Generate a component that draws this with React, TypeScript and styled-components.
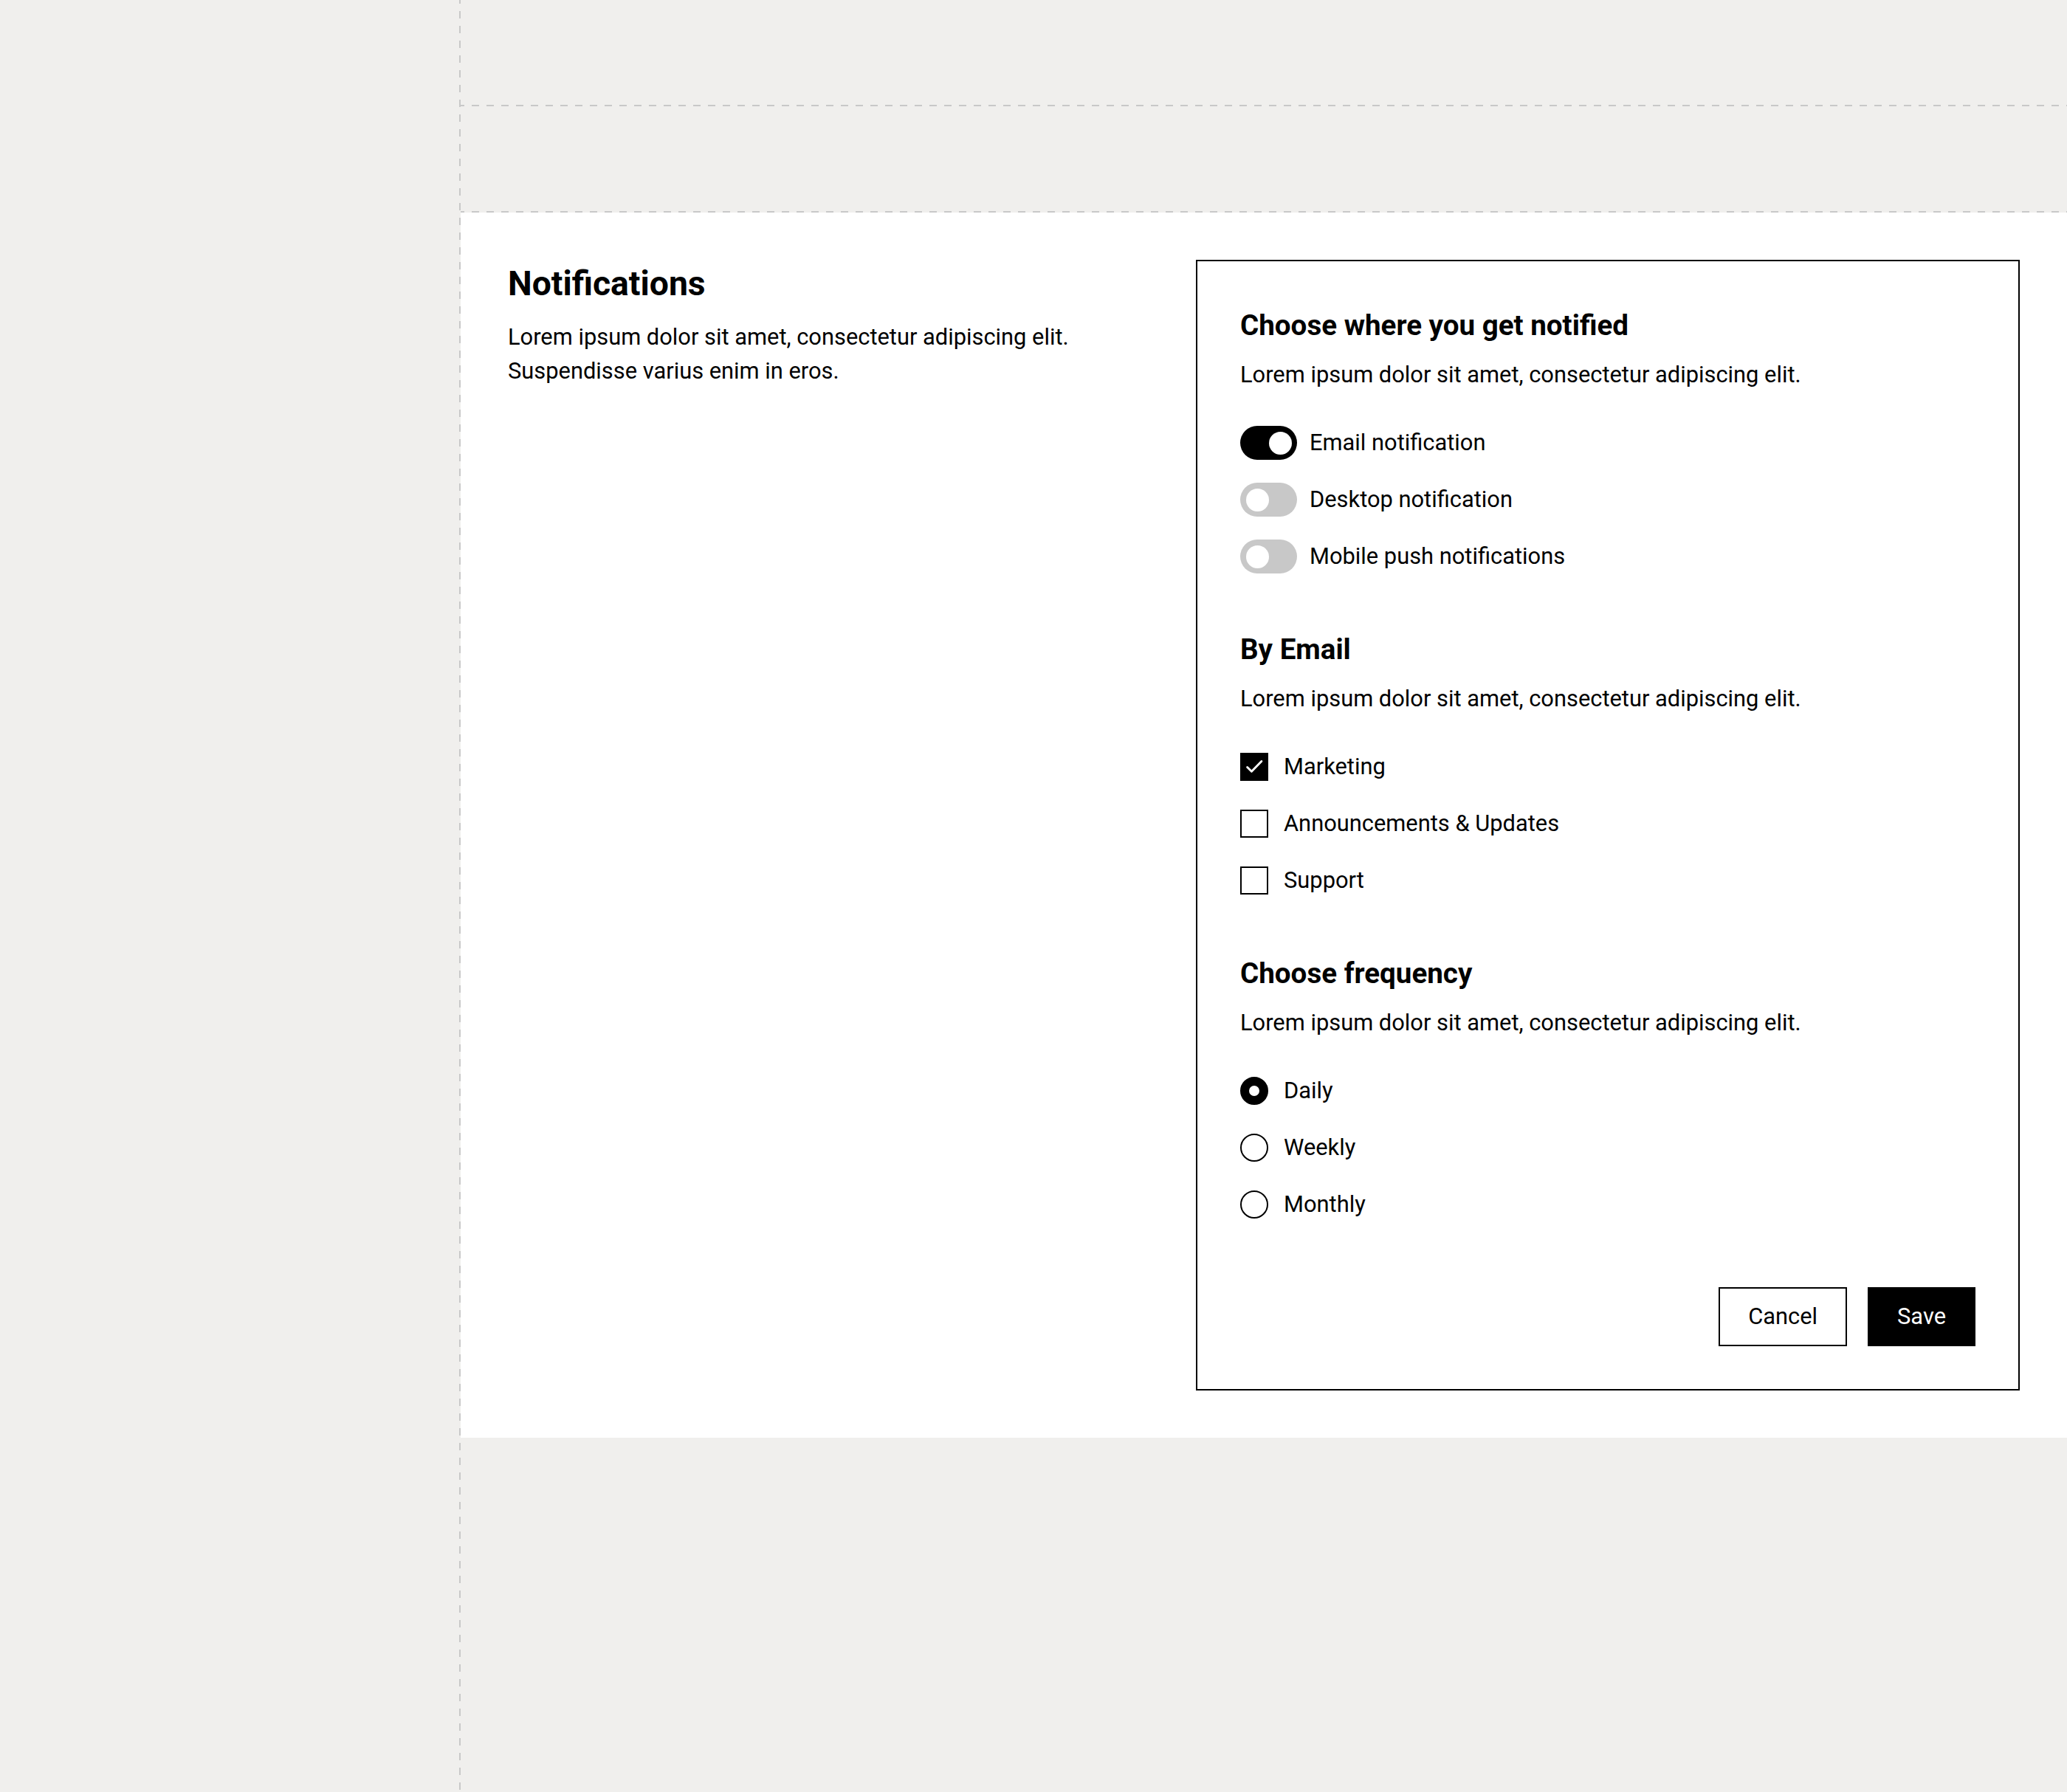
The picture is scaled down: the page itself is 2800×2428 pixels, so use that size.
import React from "react";
import styled, { createGlobalStyle } from "styled-components";

//#region
const GlobalStyle = createGlobalStyle`
  * {
    box-sizing: border-box;
  }

  body {
    margin: 0;
    background: #f0efed;
    color: #000;
    font-family: Roboto, "Liberation Sans", sans-serif;
  }
`;

const dashColor = "#c8c8c8";

const Shell = styled.div`
  display: flex;
  min-height: 100vh;
`;

const Sidebar = styled.aside`
  flex: 0 0 624px;
  background-image: repeating-linear-gradient(
    to bottom,
    ${dashColor} 0 5px,
    transparent 5px 15px,
    ${dashColor} 15px 20px
  );
  background-size: 2px 100%;
  background-position: right top;
  background-repeat: no-repeat;
`;

const Main = styled.main`
  flex: 1;
  display: flex;
  flex-direction: column;
`;

const Band = styled.div`
  height: 144px;
  background-image: repeating-linear-gradient(
    to right,
    ${dashColor} 0 5px,
    transparent 5px 15px,
    ${dashColor} 15px 20px
  );
  background-size: 100% 2px;
  background-position: left bottom;
  background-repeat: no-repeat;
`;

const Panel = styled.section`
  display: grid;
  grid-template-columns: 1fr 1116px;
  gap: 96px;
  padding: 64px;
  background: #fff;
`;

const Intro = styled.div`
  display: flex;
  flex-direction: column;
  gap: 18px;
`;

const Heading = styled.h2`
  margin: 0;
  font-size: 46.3px;
  font-weight: 700;
  line-height: 64px;
`;

const Text = styled.p`
  margin: 0;
  font-size: 30.85px;
  line-height: 46px;
`;

const Card = styled.form`
  display: flex;
  flex-direction: column;
  gap: 77px;
  padding: 61px 58px 58px;
  border: 2px solid #000;
`;

const Group = styled.div`
  display: flex;
  flex-direction: column;
`;

const GroupTitle = styled.h3`
  margin: 0 0 18px;
  font-size: 38.6px;
  font-weight: 700;
  line-height: 52px;
`;

const Options = styled.div`
  display: flex;
  flex-direction: column;
  gap: 31px;
  margin-top: 46px;
`;

const Option = styled.label<{ $gap: number }>`
  display: flex;
  align-items: center;
  gap: ${(p) => p.$gap}px;
  height: 46px;
  font-size: 30.85px;
  line-height: 46px;
`;

const Switch = styled.span<{ $on?: boolean }>`
  display: flex;
  align-items: center;
  justify-content: ${(p) => (p.$on ? "flex-end" : "flex-start")};
  width: 77px;
  height: 46px;
  padding: 0 7.5px;
  border-radius: 23px;
  background: ${(p) => (p.$on ? "#000" : "#c8c8c8")};
`;

const Knob = styled.span`
  width: 31px;
  height: 31px;
  border-radius: 50%;
  background: #fff;
`;

const Box = styled.span<{ $checked?: boolean }>`
  display: flex;
  align-items: center;
  justify-content: center;
  width: 38px;
  height: 38px;
  border: 2px solid #000;
  background: ${(p) => (p.$checked ? "#000" : "#fff")};
`;

const Radio = styled.span<{ $checked?: boolean }>`
  width: 38px;
  height: 38px;
  border-radius: 50%;
  border: ${(p) => (p.$checked ? "12.5px" : "2px")} solid #000;
  background: #fff;
`;

const Actions = styled.div`
  display: flex;
  justify-content: flex-end;
  gap: 28px;
  margin-top: 12px;
`;

const Button = styled.button<{ $primary?: boolean }>`
  padding: 15px 38px;
  border: 2px solid #000;
  border-radius: 0;
  background: ${(p) => (p.$primary ? "#000" : "#fff")};
  color: ${(p) => (p.$primary ? "#fff" : "#000")};
  font-family: inherit;
  font-size: 30.85px;
  line-height: 46px;
  cursor: pointer;
`;
//#endregion

const lorem = "Lorem ipsum dolor sit amet, consectetur adipiscing elit.";

const Check = () => (
  <svg width="38" height="38" viewBox="0 0 38 38" fill="none">
    <polyline
      points="8.5,19.5 15,26 30,10.5"
      stroke="#fff"
      strokeWidth="3.2"
      strokeLinecap="round"
      strokeLinejoin="round"
    />
  </svg>
);

const channels = [
  { label: "Email notification", on: true },
  { label: "Desktop notification", on: false },
  { label: "Mobile push notifications", on: false },
];

const topics = [
  { label: "Marketing", checked: true },
  { label: "Announcements & Updates", checked: false },
  { label: "Support", checked: false },
];

const frequencies = [
  { label: "Daily", checked: true },
  { label: "Weekly", checked: false },
  { label: "Monthly", checked: false },
];

const App = () => {
  return (
    <>
      <GlobalStyle />
      <Shell>
        <Sidebar />
        <Main>
          <Band />
          <Band />
          <Panel>
            <Intro>
              <Heading>Notifications</Heading>
              <Text>
                Lorem ipsum dolor sit amet, consectetur adipiscing elit.
                Suspendisse varius enim in eros.
              </Text>
            </Intro>

            <Card onSubmit={(e) => e.preventDefault()}>
              <Group>
                <GroupTitle>Choose where you get notified</GroupTitle>
                <Text>{lorem}</Text>
                <Options>
                  {channels.map((item) => (
                    <Option key={item.label} $gap={17}>
                      <Switch $on={item.on}>
                        <Knob />
                      </Switch>
                      {item.label}
                    </Option>
                  ))}
                </Options>
              </Group>

              <Group>
                <GroupTitle>By Email</GroupTitle>
                <Text>{lorem}</Text>
                <Options>
                  {topics.map((item) => (
                    <Option key={item.label} $gap={21}>
                      <Box $checked={item.checked}>
                        {item.checked && <Check />}
                      </Box>
                      {item.label}
                    </Option>
                  ))}
                </Options>
              </Group>

              <Group>
                <GroupTitle>Choose frequency</GroupTitle>
                <Text>{lorem}</Text>
                <Options>
                  {frequencies.map((item) => (
                    <Option key={item.label} $gap={21}>
                      <Radio $checked={item.checked} />
                      {item.label}
                    </Option>
                  ))}
                </Options>
              </Group>

              <Actions>
                <Button type="button">Cancel</Button>
                <Button type="submit" $primary>
                  Save
                </Button>
              </Actions>
            </Card>
          </Panel>
        </Main>
      </Shell>
    </>
  );
};

export default App;
